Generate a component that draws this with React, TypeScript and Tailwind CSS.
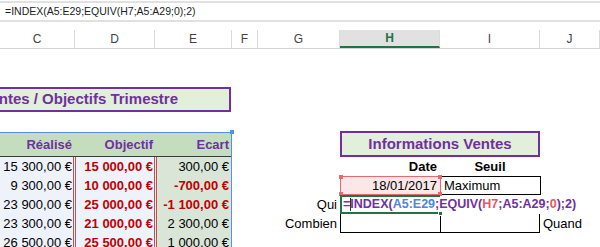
import React from 'react';

const COLS = [
    { label: 'C', cls: 'w-[75px]' },
    { label: 'D', cls: 'w-[80px]' },
    { label: 'E', cls: 'w-[77px]' },
    { label: 'F', cls: 'w-[26px]' },
    { label: 'G', cls: 'w-[82px]' },
    { label: 'H', cls: 'w-[100px]', active: true },
    { label: 'I', cls: 'w-[100px]' },
    { label: 'J', cls: 'w-[60px]' },
];

const ROWS: [string, string, string, boolean][] = [
    ['15 300,00 €', '15 000,00 €', '300,00 €', false],
    ['9 300,00 €', '10 000,00 €', '-700,00 €', true],
    ['23 900,00 €', '25 000,00 €', '-1 100,00 €', true],
    ['23 300,00 €', '21 000,00 €', '2 300,00 €', false],
    ['26 500,00 €', '25 500,00 €', '1 000,00 €', false],
];

function Handle({ className }: { className: string }) {
    return <span className={`absolute w-[4px] h-[4px] ${className}`} />;
}

function SalesTable() {
    return (
        <div className="w-[232px] flex flex-col">
            <div className="h-[38px]" />
            {/* Title (merged cells, starts off-screen) */}
            <div className="h-[25px] w-[231px] bg-[#e2efda] border-y-2 border-r-2 border-[#7030a0] flex items-center justify-end pr-[51px] overflow-hidden whitespace-nowrap">
                <span className="text-[15px] font-bold text-[#7030a0]">Ventes / Objectifs Trimestre</span>
            </div>
            <div className="h-[20px]" />

            <div className="relative border-t border-r border-[#5b8ee6]">
                <Handle className="-top-[3px] -right-[3px] bg-[#5b8ee6]" />
                {/* Header */}
                <div className="h-[24px] flex bg-[#c5ddbf] border-b border-[#3a3a3a] text-[13px] font-bold text-[#7030a0]">
                    <div className="w-[73px] flex items-center justify-end pr-[1px]">Réalisé</div>
                    <div className="w-[84px] flex items-center justify-end pr-[4px]">Objectif</div>
                    <div className="w-[74px] flex items-center justify-end pr-[2px]">Ecart</div>
                </div>
                {ROWS.map(([real, obj, ecart, neg]) => (
                    <div key={real} className="h-[19px] flex text-[13px]">
                        <div className="w-[73px] bg-[#eef2fa] text-black flex items-center justify-end pr-[1px]">{real}</div>
                        <div className="w-[84px] bg-[#eef2fa] border-x-[3px] border-double border-[#c0504d] text-[#c00000] font-bold flex items-center justify-end pr-[1px]">{obj}</div>
                        <div className={`w-[74px] bg-[#d9e5d7] flex items-center justify-end pr-[2px] ${neg ? 'text-[#c00000] font-bold' : 'text-black'}`}>{ecart}</div>
                    </div>
                ))}
            </div>
        </div>
    );
}

function InfoBlock() {
    const purple = 'text-[#7030a0]';
    return (
        <div className="flex flex-col text-[13px] text-black">
            <div className="h-[82px]" />
            <div className="h-[26px] flex">
                <div className="w-[82px]" />
                <div className="w-[200px] bg-[#e2efda] border-2 border-[#7030a0] flex items-center justify-center">
                    <span className="text-[15px] font-bold text-[#7030a0]">Informations Ventes</span>
                </div>
            </div>

            {/* Date / Seuil */}
            <div className="h-[19px] flex font-bold">
                <div className="w-[82px]" />
                <div className="w-[100px] flex items-center justify-end pr-[3px]">Date</div>
                <div className="w-[100px] flex items-center justify-center">Seuil</div>
            </div>

            {/* H7 / I7 */}
            <div className="h-[19px] flex">
                <div className="w-[82px]" />
                <div className="relative w-[101px] bg-[#fce6e6] border border-[#e8696b] flex items-center justify-end pr-[3px]">
                    18/01/2017
                    <Handle className="-top-[2px] -left-[2px] bg-[#e8696b]" />
                    <Handle className="-top-[2px] -right-[2px] bg-[#e8696b]" />
                    <Handle className="-bottom-[2px] -left-[2px] bg-[#e8696b]" />
                    <Handle className="-bottom-[2px] -right-[2px] bg-[#e8696b]" />
                </div>
                <div className="w-[100px] border-y border-r border-black flex items-center pl-[3px]">Maximum</div>
            </div>

            {/* Qui / active cell H8 being edited */}
            <div className="h-[19px] flex">
                <div className="w-[82px] flex items-center justify-end pr-[3px]">Qui</div>
                <div className="relative w-[100px] h-[19px] border-2 border-r-0 border-[#217346]" />
                <div className="relative -ml-[100px] flex items-center whitespace-nowrap z-10 bg-white/0">
                    <span className="pl-[3px] text-[12.5px] font-bold">
                        <span className={purple}>=INDEX(</span>
                        <span className="text-[#4f86d6]">A5:E29</span>
                        <span className={purple}>;EQUIV(</span>
                        <span className="text-[#e8585e]">H7</span>
                        <span className={purple}>;A5:A29;</span>
                        <span className="text-[#e8585e]">0</span>
                        <span className={purple}>);2)</span>
                    </span>
                    <span className="absolute left-[10px] top-[3px] w-px h-[13px] bg-[#333]" />
                </div>
            </div>

            {/* Combien / Quand */}
            <div className="h-[19px] flex">
                <div className="w-[82px] flex items-center justify-end pr-[3px]">Combien</div>
                <div className="relative w-[100px] border-b border-l border-black">
                    <span className="absolute -top-[3px] -right-[3px] w-[5px] h-[5px] bg-[#217346] border border-white" />
                </div>
                <div className="w-[100px] border-b border-x border-black" />
                <div className="flex items-center pl-[3px]">Quand</div>
            </div>
        </div>
    );
}

export default function App() {
    return (
        <div className="w-[600px] h-[247px] overflow-hidden bg-white font-['Liberation_Sans',Arial,sans-serif]">
            {/* Formula bar */}
            <div className="mt-px h-[21px] border-y-2 border-[#e1e1e1] flex items-center pl-[5px] text-[10.5px] text-[#222] whitespace-nowrap">
                =INDEX(A5:E29;EQUIV(H7;A5:A29;0);2)
            </div>
            <div className="h-[8px]" />

            {/* Column headers */}
            <div className="h-[19px] flex border-b border-[#d4d4d4] text-[12px] text-[#444]">
                {COLS.map(c => (
                    <div
                        key={c.label}
                        className={`${c.cls} shrink-0 flex items-center justify-center border-r border-[#dadada] ${c.active ? 'bg-[#e1e1e1] border-b-2 border-b-[#217346] text-[#217346] font-bold' : ''}`}
                    >
                        {c.label}
                    </div>
                ))}
            </div>

            {/* Sheet body */}
            <div className="flex">
                <SalesTable />
                <div className="w-[26px]" />
                <InfoBlock />
            </div>
        </div>
    );
}
